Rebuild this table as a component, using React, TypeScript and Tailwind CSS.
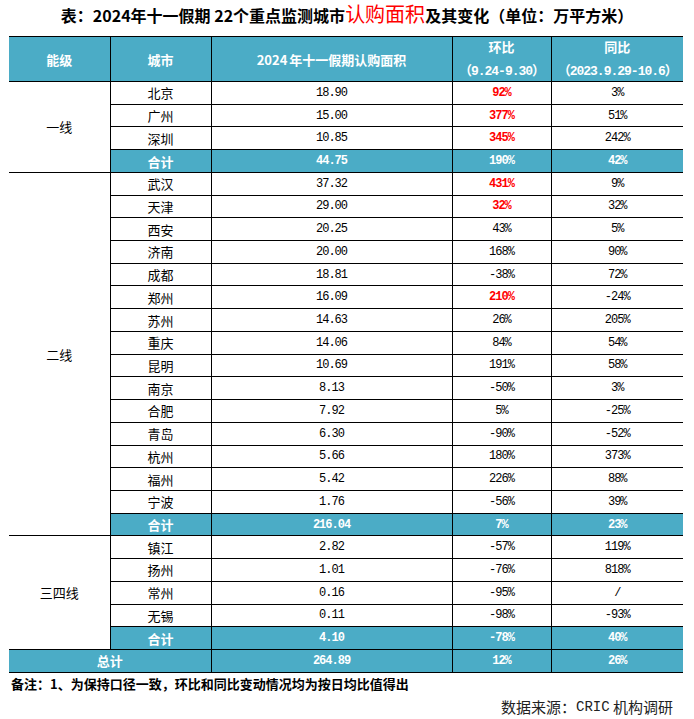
import React from 'react';

type Row = { city: string; area: string; hb: string; tb: string; hot?: boolean };
type Group = { tier: string; rows: Row[]; sum: [string, string, string] };

const GROUPS: Group[] = [
  {
    tier: '一线',
    rows: [
      { city: '北京', area: '18.90', hb: '92%', tb: '3%', hot: true },
      { city: '广州', area: '15.00', hb: '377%', tb: '51%', hot: true },
      { city: '深圳', area: '10.85', hb: '345%', tb: '242%', hot: true },
    ],
    sum: ['44.75', '190%', '42%'],
  },
  {
    tier: '二线',
    rows: [
      { city: '武汉', area: '37.32', hb: '431%', tb: '9%', hot: true },
      { city: '天津', area: '29.00', hb: '32%', tb: '32%', hot: true },
      { city: '西安', area: '20.25', hb: '43%', tb: '5%' },
      { city: '济南', area: '20.00', hb: '168%', tb: '90%' },
      { city: '成都', area: '18.81', hb: '-38%', tb: '72%' },
      { city: '郑州', area: '16.09', hb: '210%', tb: '-24%', hot: true },
      { city: '苏州', area: '14.63', hb: '26%', tb: '205%' },
      { city: '重庆', area: '14.06', hb: '84%', tb: '54%' },
      { city: '昆明', area: '10.69', hb: '191%', tb: '58%' },
      { city: '南京', area: '8.13', hb: '-50%', tb: '3%' },
      { city: '合肥', area: '7.92', hb: '5%', tb: '-25%' },
      { city: '青岛', area: '6.30', hb: '-90%', tb: '-52%' },
      { city: '杭州', area: '5.66', hb: '180%', tb: '373%' },
      { city: '福州', area: '5.42', hb: '226%', tb: '88%' },
      { city: '宁波', area: '1.76', hb: '-56%', tb: '39%' },
    ],
    sum: ['216.04', '7%', '23%'],
  },
  {
    tier: '三四线',
    rows: [
      { city: '镇江', area: '2.82', hb: '-57%', tb: '119%' },
      { city: '扬州', area: '1.01', hb: '-76%', tb: '818%' },
      { city: '常州', area: '0.16', hb: '-95%', tb: '/' },
      { city: '无锡', area: '0.11', hb: '-98%', tb: '-93%' },
    ],
    sum: ['4.10', '-78%', '40%'],
  },
];

const cjk = "font-['Noto_Sans_CJK_SC',sans-serif]";
const num = "font-['Liberation_Mono','Noto_Sans_CJK_SC',monospace] tracking-[-1px]";
const cell = 'border border-black p-0 text-center align-middle leading-none';
const blue = 'bg-[#4bacc6] text-white font-bold';

export default function App() {
  return (
    <div className="w-[694px] h-[719px] bg-white text-black overflow-hidden">
      <div className={`h-[36px] pt-[3px] text-center leading-[22px] ${cjk}`}>
        <span className="text-[16px] font-bold">表：2024年十一假期 22个重点监测城市</span>
        <span className="text-[20px] text-[#ff0000]">认购面积</span>
        <span className="text-[16px] font-bold">及其变化（单位：万平方米）</span>
      </div>

      <table className="ml-[9px] w-[674px] table-fixed border-collapse text-[12px]">
        <colgroup>
          <col className="w-[101px]" />
          <col className="w-[101px]" />
          <col className="w-[241px]" />
          <col className="w-[99px]" />
          <col className="w-[132px]" />
        </colgroup>
        <thead>
          <tr className="h-[45px]">
            <th className={`${cell} ${blue} ${cjk} border-l-0 text-[13px]`}>能级</th>
            <th className={`${cell} ${blue} ${cjk} text-[13px]`}>城市</th>
            <th className={`${cell} ${blue} ${cjk} text-[13px]`}>
              2024<span className="ml-[2px]">年十一假期认购面积</span>
            </th>
            <th className={`${cell} ${blue} ${cjk} text-[13px]`}>
              <div>环比</div>
              <div className={`mt-[12px] ${num} tracking-[-0.5px]`}>（9.24-9.30）</div>
            </th>
            <th className={`${cell} ${blue} ${cjk} border-r-0 text-[13px]`}>
              <div>同比</div>
              <div className={`mt-[12px] ${num} tracking-[-0.5px]`}>（2023.9.29-10.6）</div>
            </th>
          </tr>
        </thead>
        <tbody>
          {GROUPS.map((g) => (
            <React.Fragment key={g.tier}>
              {g.rows.map((r, i) => (
                <tr key={r.city} className="h-[22.73px]">
                  {i === 0 && (
                    <td rowSpan={g.rows.length + 1} className={`${cell} ${cjk} border-l-0 text-[13px]`}>
                      {g.tier}
                    </td>
                  )}
                  <td className={`${cell} ${cjk} text-[13px]`}>{r.city}</td>
                  <td className={`${cell} ${num}`}>{r.area}</td>
                  <td className={`${cell} ${num} ${r.hot ? 'text-[#ff0000] font-bold' : ''}`}>{r.hb}</td>
                  <td className={`${cell} ${num} border-r-0`}>{r.tb}</td>
                </tr>
              ))}
              <tr className="h-[22.73px]">
                <td className={`${cell} ${blue} ${cjk} text-[13px]`}>合计</td>
                <td className={`${cell} ${blue} ${num}`}>{g.sum[0]}</td>
                <td className={`${cell} ${blue} ${num}`}>{g.sum[1]}</td>
                <td className={`${cell} ${blue} ${num} border-r-0`}>{g.sum[2]}</td>
              </tr>
            </React.Fragment>
          ))}
          <tr className="h-[22.73px]">
            <td colSpan={2} className={`${cell} ${blue} ${cjk} border-l-0 text-[13px]`}>总计</td>
            <td className={`${cell} ${blue} ${num}`}>264.89</td>
            <td className={`${cell} ${blue} ${num}`}>12%</td>
            <td className={`${cell} ${blue} ${num} border-r-0`}>26%</td>
          </tr>
        </tbody>
      </table>

      <div className={`h-[22px] pl-[11px] flex items-center text-[13px] font-bold ${cjk}`}>
        备注：1、为保持口径一致，环比和同比变动情况均为按日均比值得出
      </div>
      <div className={`h-[26px] pr-[21px] flex items-center justify-end text-[15px] text-[#222] ${cjk}`}>
        数据来源：<span className="font-['Liberation_Mono',monospace] text-[14px]">CRIC</span>&nbsp;机构调研
      </div>
    </div>
  );
}
